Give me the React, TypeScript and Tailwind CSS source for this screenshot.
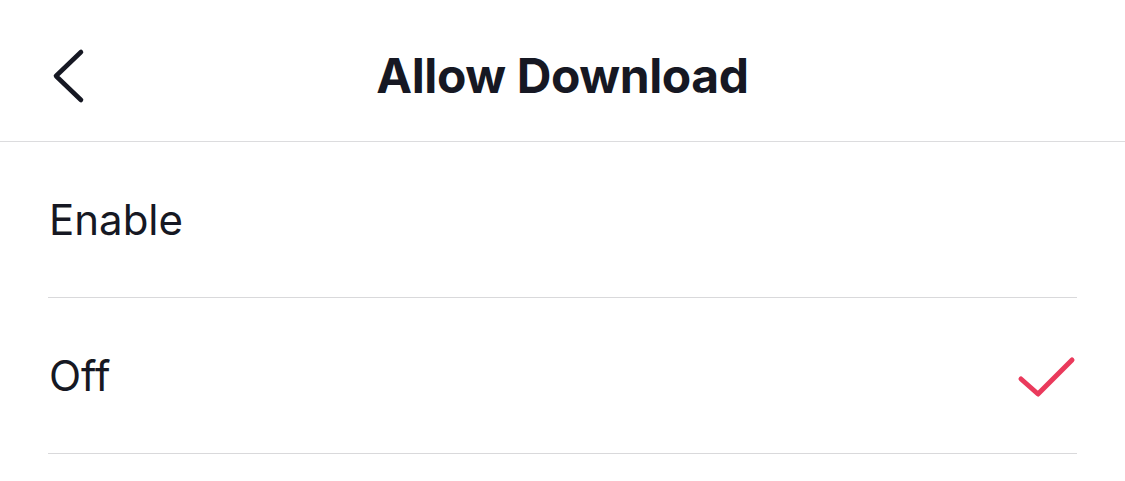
const options = [
  { label: "Enable", selected: false },
  { label: "Off", selected: true },
];

const BackIcon = () => (
  <svg width="40" height="60" viewBox="0 0 40 60" fill="none">
    <path
      d="M31 7 L6 31 L31 55"
      stroke="#161823"
      strokeWidth="4.6"
      strokeLinecap="round"
      strokeLinejoin="round"
    />
  </svg>
);

const CheckIcon = () => (
  <svg width="60" height="50" viewBox="0 0 60 50" fill="none">
    <path
      d="M4 28 L21 43 L55 9"
      stroke="#ea3a5c"
      strokeWidth="5"
      strokeLinecap="round"
      strokeLinejoin="round"
    />
  </svg>
);

const App = () => {
  return (
    <div className="w-[1125px] h-[481px] bg-white text-[#161823] font-['Inter','Liberation_Sans',sans-serif] overflow-hidden">
      {/* Header */}
      <div className="relative h-[142px] pt-[10px] flex items-center justify-center border-b border-[#dcdcde]">
        <button className="absolute left-[50px] top-[45px]">
          <BackIcon />
        </button>
        <h1 className="text-[48px] font-bold tracking-[-0.4px]">Allow Download</h1>
      </div>

      {/* Options */}
      <div className="px-[48px]">
        {options.map((option) => (
          <div
            key={option.label}
            className="h-[156px] flex items-center justify-between border-b border-[#d9d9db]"
          >
            <span className="text-[42px] font-normal pl-[1px]">{option.label}</span>
            {option.selected && <CheckIcon />}
          </div>
        ))}
      </div>
    </div>
  );
};

export default App;
